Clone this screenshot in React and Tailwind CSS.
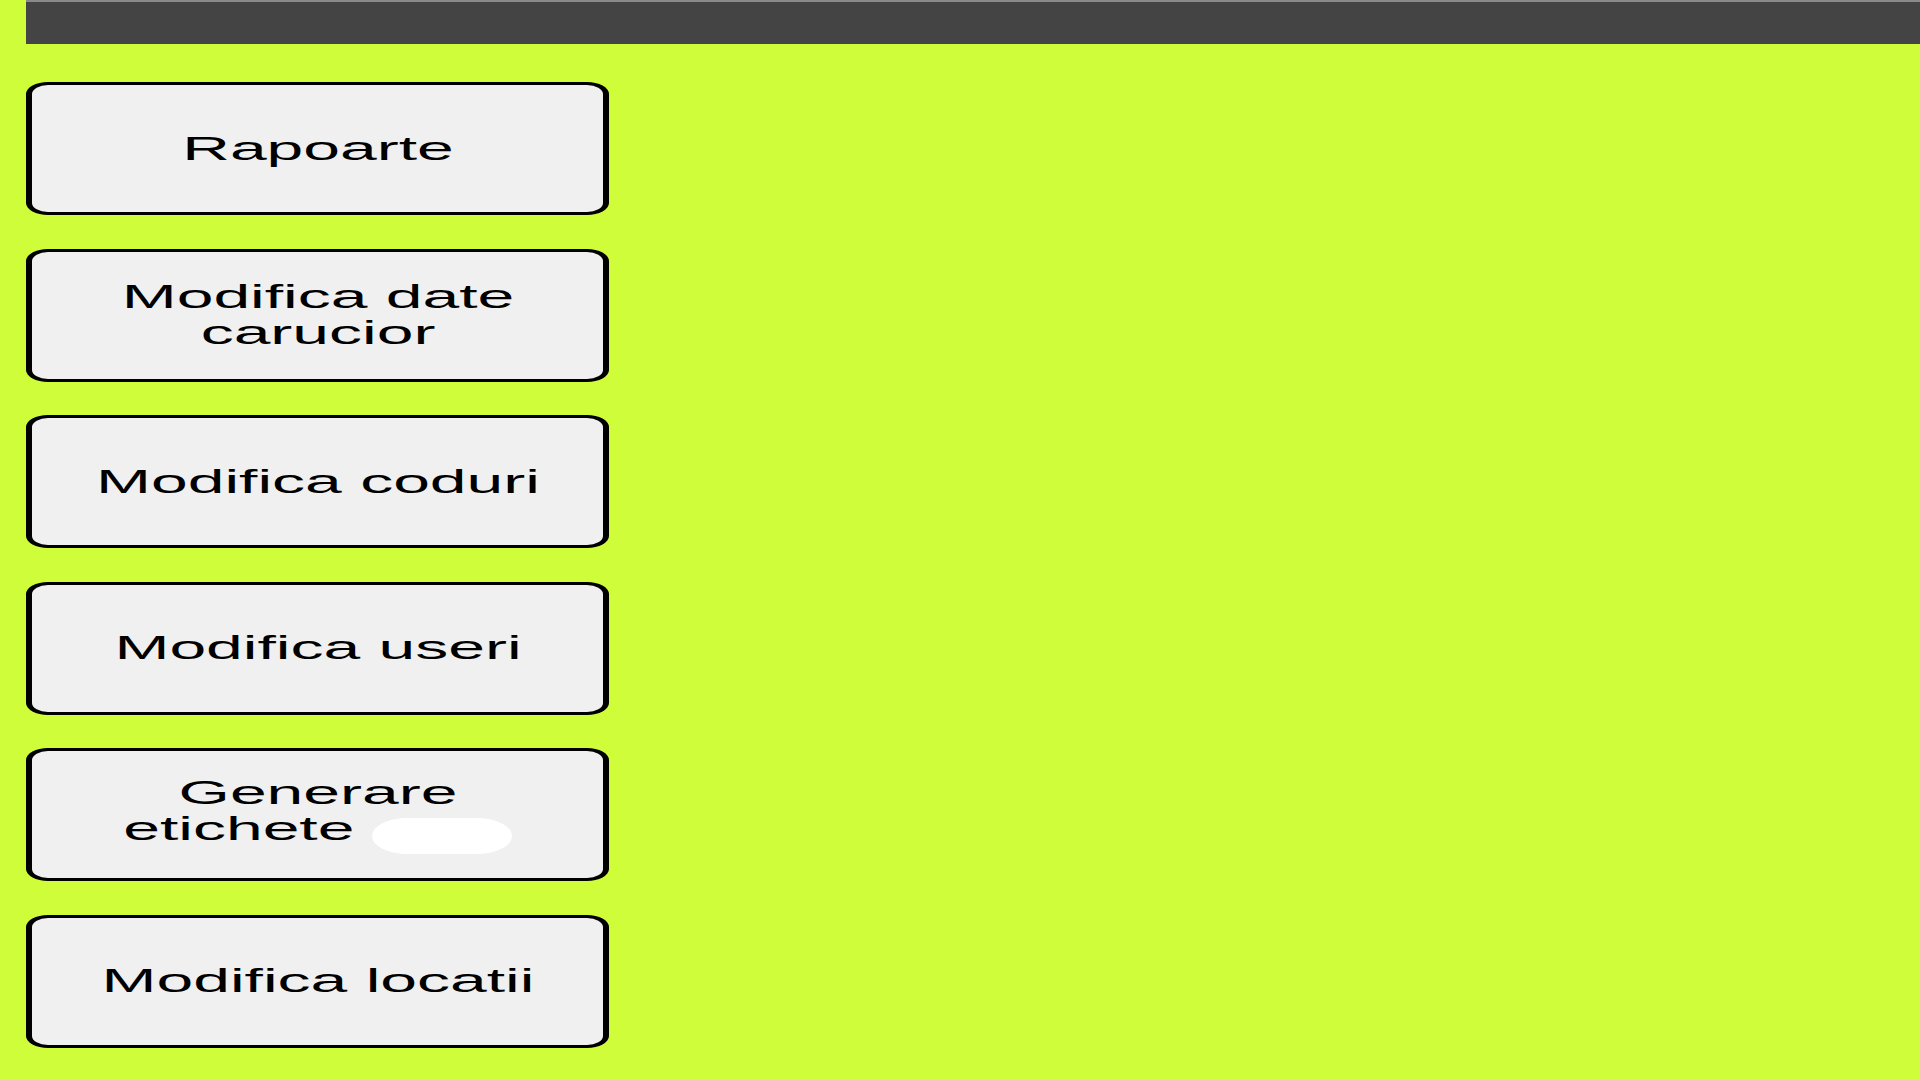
import React from "react";

const items = [
    { id: 1, label: "Rapoarte" },
    { id: 2, label: "Modifica date carucior" },
    { id: 3, label: "Modifica coduri" },
    { id: 4, label: "Modifica useri" },
    { id: 5, label: "Generare etichete", hidden: true },
    { id: 6, label: "Modifica locatii" },
];

function MenuButton({ label, hidden }) {
    return (
        <button className="w-[583px] h-[133px] flex items-center justify-center bg-[#f0f0f0] border-x-[6px] border-y-[3px] border-black rounded-[22px/12px] cursor-pointer">
            <span className="inline-block w-[238px] scale-x-200 text-center text-black text-[33px] leading-[36px] font-['Liberation_Sans',Arial,sans-serif]">
                {label}
                {hidden && (
                    <>
                        {" "}
                        <span className="inline-block w-[70px] h-[36px] bg-white rounded-full align-[-14px]"></span>
                    </>
                )}
            </span>
        </button>
    );
}

export default function App() {
    return (
        <main className="min-h-screen w-full bg-[#d0fd39] pl-[26px] pb-10">
            <div className="h-[44px] bg-[#444444] border-t-2 border-[#8a8a8a]"></div>
            <div className="flex flex-col gap-[33.5px] pt-[38px]">
                {items.map((it) => (
                    <MenuButton key={it.id} label={it.label} hidden={it.hidden} />
                ))}
            </div>
        </main>
    );
}
